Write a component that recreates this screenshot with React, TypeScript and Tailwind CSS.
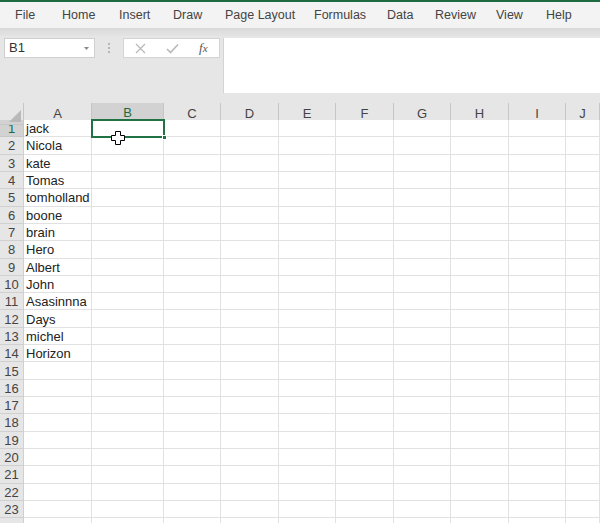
import React from 'react';

const menu: [string, number][] = [
  ['File', 47],
  ['Home', 57],
  ['Insert', 54],
  ['Draw', 52],
  ['Page Layout', 89],
  ['Formulas', 73],
  ['Data', 48],
  ['Review', 61],
  ['View', 50],
  ['Help', 50],
];

const cols = ['A', 'B', 'C', 'D', 'E', 'F', 'G', 'H', 'I', 'J'];

const names = [
  'jack',
  'Nicola',
  'kate',
  'Tomas',
  'tomholland',
  'boone',
  'brain',
  'Hero',
  'Albert',
  'John',
  'Asasinnna',
  'Days',
  'michel',
  'Horizon',
];

const gridCols = 'grid grid-cols-[24px_68px_72px_57px_58px_57px_58px_57px_58px_57px_1fr]';

export default function App() {
  const rows = Array.from({ length: 24 }, (_, i) => i + 1);

  return (
    <div className="h-[523px] w-[600px] overflow-hidden bg-[#e6e6e6] font-['Liberation_Sans',Arial,sans-serif] text-[#444]">
      {/* Menu bar */}
      <div className="flex h-[28px] items-center border-t-2 border-[#1e6b41] bg-[#f3f3f3] pl-[15px] text-[12.5px] text-[#444]">
        {menu.map(([label, w]) => (
          <div key={label} className="shrink-0" style={{ width: w }}>
            {label}
          </div>
        ))}
      </div>
      <div className="h-[8px] bg-gradient-to-b from-[#d9d9d9] to-[#e4e4e4]" />

      {/* Formula bar */}
      <div className="flex items-start pl-[4px] pt-[2px]">
        <div className="flex h-[20px] w-[91px] items-center justify-between border border-[#cfcfcf] bg-white pl-[4px] pr-[5px] text-[13px] text-[#333]">
          <span>B1</span>
          <svg width="5" height="3" viewBox="0 0 5 3">
            <path d="M0 0 L5 0 L2.5 3 Z" fill="#8a8a8a" />
          </svg>
        </div>
        <div className="flex h-[20px] w-[28px] flex-col items-center justify-center gap-[2px]">
          <span className="h-[2px] w-[2px] bg-[#b5b5b5]" />
          <span className="h-[2px] w-[2px] bg-[#b5b5b5]" />
          <span className="h-[2px] w-[2px] bg-[#b5b5b5]" />
        </div>
        <div className="flex h-[20px] w-[97px] items-center border border-[#d4d4d4] bg-white">
          <svg className="ml-[11px]" width="11" height="11" viewBox="0 0 11 11">
            <path d="M1 1 L10 10 M10 1 L1 10" stroke="#b8b8b8" strokeWidth="1.2" />
          </svg>
          <svg className="ml-[20px]" width="13" height="11" viewBox="0 0 13 11">
            <path d="M1 6 L4.5 9.5 L12 1.5" stroke="#b8b8b8" strokeWidth="1.6" fill="none" />
          </svg>
          <span className="ml-[20px] font-['Liberation_Serif',serif] text-[13px] italic text-[#555]">
            f<span className="text-[11px]">x</span>
          </span>
        </div>
        <div className="ml-[3px] h-[55px] flex-1 border-l border-[#d4d4d4] bg-white" />
      </div>

      {/* Sheet */}
      <div className="relative mt-[10px]">
        {/* Column headers */}
        <div className={`${gridCols} h-[17px] text-[13px]`}>
          <div className="relative border-r border-b border-[#c6c6c6]">
            <svg className="absolute bottom-[2px] right-[2px]" width="12" height="12" viewBox="0 0 12 12">
              <path d="M12 0 L12 12 L0 12 Z" fill="#b9b9b9" />
            </svg>
          </div>
          {cols.map((c) => (
            <div
              key={c}
              className={
                c === 'B'
                  ? 'flex items-center justify-center border-r border-b-2 border-b-[#217346] border-r-[#c6c6c6] bg-[#d2d2d2] text-[#1e6b41]'
                  : 'flex items-center justify-center border-r border-b border-[#c6c6c6] text-[#444]'
              }
            >
              {c}
            </div>
          ))}
        </div>

        {/* Rows */}
        {rows.map((r) => (
          <div key={r} className={`${gridCols} h-[17.32px] text-[13px] leading-none`}>
            <div
              className={
                r === 1
                  ? 'flex items-center justify-center border-r border-b border-[#c6c6c6] bg-[#d2d2d2] pt-[1px] text-[#1e6b41]'
                  : 'flex items-center justify-center border-r border-b border-[#d0d0d0] pt-[1px] text-[#444]'
              }
            >
              {r < 24 ? r : ''}
            </div>
            <div className="flex items-center overflow-visible whitespace-nowrap border-r border-b border-[#e1e1e1] bg-white pl-[2px] pt-[1px] text-[#222]">
              {names[r - 1] ?? ''}
            </div>
            {cols.slice(1).map((c) => (
              <div key={c} className="border-r border-b border-[#e1e1e1] bg-white" />
            ))}
          </div>
        ))}

        {/* Selected cell B1 */}
        <div className="pointer-events-none absolute left-[91px] top-[16px] h-[19px] w-[74px] border-2 border-[#217346]">
          <div className="absolute -bottom-[4px] -right-[4px] h-[5px] w-[5px] border border-white bg-[#217346]" />
        </div>

        {/* Cursor */}
        <svg className="absolute left-[111px] top-[28px]" width="14" height="14" viewBox="0 0 14 14">
          <path
            d="M4.5 0.5 H9.5 V4.5 H13.5 V9.5 H9.5 V13.5 H4.5 V9.5 H0.5 V4.5 H4.5 Z"
            fill="white"
            stroke="black"
            strokeWidth="1"
          />
        </svg>
      </div>
    </div>
  );
}
